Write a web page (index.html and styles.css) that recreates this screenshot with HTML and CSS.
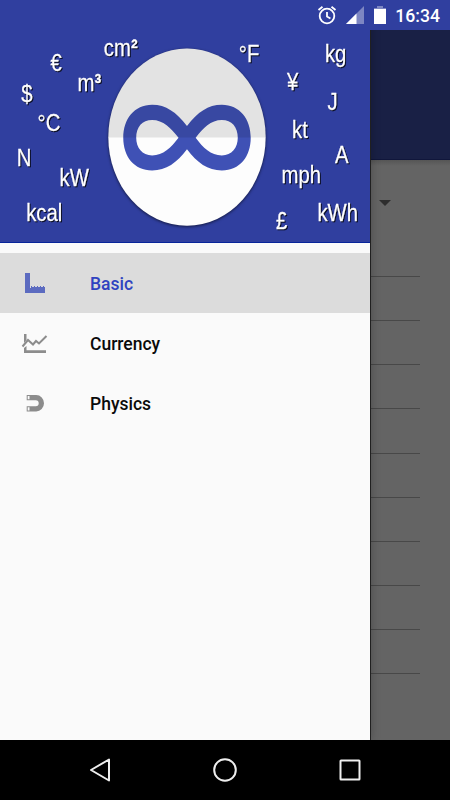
FILE: index.html
```html
<!DOCTYPE html>
<html lang="en">
<head>
<meta charset="utf-8">
<title>Unit converter</title>
<link rel="stylesheet" href="styles.css">
</head>
<body>
<div class="phone">
  <main class="page">
    <div class="status-strip"></div>
    <div class="toolbar"></div>
    <div class="content">
      <div class="picker"><span class="caret"></span></div>
      <div class="rows"><i></i><i></i><i></i><i></i><i></i><i></i><i></i><i></i><i></i><i></i></div>
    </div>
  </main>

  <aside class="drawer">
    <svg class="cover" viewBox="0 0 370 243" width="370" height="243">
      <defs>
        <clipPath id="top"><rect x="100" y="40" width="180" height="98"/></clipPath>
      </defs>
      <ellipse class="disc" cx="187" cy="137.700" rx="79" ry="89"/>
      <path class="loop" fill-rule="evenodd" transform="translate(0 .4)" d="M187 126C176 112 166 104.700 152 104.700C134 104.700 123 119 123 138C123 157 134 170.800 152 170.800C166 170.800 177 163 187 149.500C197 163 208 170.800 222 170.800C240 170.800 251 157 251 138C251 119 240 104.700 222 104.700C208 104.700 198 112 187 126ZM178.500 138C171 148 163 155.700 152 155.700C142 155.700 136 148 136 138C136 127 142 120 152 120C163 120 171 128 178.500 138ZM195.700 138C203 128 211 120 222 120C232 120 238 127 238 138C238 148 232 155.700 222 155.700C211 155.700 203 148 195.700 138Z"/>
      <ellipse class="shade" cx="187" cy="137.700" rx="79" ry="89" clip-path="url(#top)"/>
      <g class="units">
        <text transform="translate(50 71) scale(.888 1.030)">€</text>
        <text transform="translate(103.500 56.500) scale(.888 1.030)">cm<tspan class="sup">²</tspan></text>
        <text transform="translate(77 91.500) scale(.888 1.030)">m<tspan class="sup">³</tspan></text>
        <text transform="translate(20.500 102.500) scale(.888 1.030)">$</text>
        <text transform="translate(37 131.500) scale(.888 1.030)">°C</text>
        <text transform="translate(16 166.800) scale(.888 1.030)">N</text>
        <text transform="translate(59 186.500) scale(.888 1.030)">kW</text>
        <text transform="translate(25.500 222) scale(.888 1.030)">kcal</text>
        <text transform="translate(239 62.500) scale(.888 1.030)">°F</text>
        <text transform="translate(325.500 62.500) scale(.888 1.030)">kg</text>
        <text transform="translate(287.500 90.500) scale(.888 1.030)">¥</text>
        <text transform="translate(328 110.500) scale(.888 1.030)">J</text>
        <text transform="translate(292.500 139) scale(.888 1.030)">kt</text>
        <text transform="translate(335.500 163.500) scale(.888 1.030)">A</text>
        <text transform="translate(282 183.500) scale(.888 1.030)">mph</text>
        <text transform="translate(276.500 230) scale(.888 1.030)">£</text>
        <text transform="translate(318 222) scale(.888 1.030)">kWh</text>
      </g>
    </svg>
    <nav class="menu">
      <a class="item active">
        <svg class="icon" viewBox="0 0 30 30"><path d="M5 5h5v15h1v-2h1v1h2v-1h1v1h2v-1h1v1h2v-1h1v1h2v-1h1v1h1v6H5z"/></svg>
        <span>Basic</span>
      </a>
      <a class="item">
        <svg class="icon" viewBox="0 0 30 30"><path d="M4 6h2.500v6L4 15zM4 20l2.500-2v4.200H26V25H4z"/><path class="stroke" d="M2.500 18.500L8 12l5 4.500 3-3.500 3 2.500 7.500-7.500"/></svg>
        <span>Currency</span>
      </a>
      <a class="item">
        <svg class="icon" viewBox="0 0 30 30"><path fill-rule="evenodd" d="M6.700 7h9.500a7.800 8.200 0 0 1 0 16.400H6.700v-5.200h9a3 3 0 0 0 0-6h-9zM7.700 8v3.200h1.800V8zM7.700 19.200v3.200h1.800v-3.200z"/></svg>
        <span>Physics</span>
      </a>
    </nav>
  </aside>

  <header class="status">
    <svg class="alarm" viewBox="0 0 20 20" width="20" height="20"><circle cx="10" cy="11" r="7.300"/><path d="M10 7v4.500l3.400 2M1.500 5l4-3.300M18.500 5l-4-3.300"/></svg>
    <svg class="signal" viewBox="0 0 18 18" width="18" height="18"><path class="dim" d="M18 0v18H0z"/><path d="M10.500 7.500V18H0z"/></svg>
    <svg class="battery" viewBox="0 0 12 18" width="12" height="18"><path class="dim" d="M3 0h6v2h3v2H0V2h3z"/><path d="M0 3h12v15H0z"/></svg>
    <span class="clock">16:34</span>
  </header>

  <footer class="navbar">
    <svg viewBox="0 0 26 26" width="26" height="26"><path d="M22 2.500v21L4 13z"/></svg>
    <svg viewBox="0 0 26 26" width="26" height="26"><circle cx="13" cy="13" r="10.800"/></svg>
    <svg viewBox="0 0 26 26" width="26" height="26"><rect x="3.500" y="3.500" width="19" height="19" rx=".5"/></svg>
  </footer>
</div>
</body>
</html>
```
FILE: styles.css
```css
* { box-sizing: border-box; }
body { margin: 0; font-family: Roboto, sans-serif; }
.phone {
  position: relative;
  width: 450px;
  height: 800px;
  overflow: hidden;
  display: flex;
  flex-direction: column;
  background: #000;
}
.page { height: 740px; display: flex; flex-direction: column; background: #646464; }
.status-strip { height: 30px; background: #303f9f; }
.toolbar { height: 130px; background: #192045; border-bottom: 1px solid #10163b; }
.content {
  flex: 1;
  padding-right: 30px;
  background: linear-gradient(#555, #646464 6px);
}
.picker { height: 72px; display: flex; justify-content: flex-end; padding: 40px 29px 0 0; }
.caret { width: 12px; height: 6px; background: #2d2d2d; clip-path: polygon(0 0, 100% 0, 50% 100%); }
.rows { display: flex; flex-direction: column; }
.rows i { height: 44.150px; border-bottom: 1px solid #484848; }
.rows i:first-child { height: 45px; }
.drawer {
  position: absolute;
  left: 0;
  top: 0;
  width: 370px;
  height: 740px;
  background: #fafafa;
  box-shadow: 1px 0 0 #202020, 0 0 10px rgba(0, 0, 0, .3);
}
.cover { display: block; background: #303f9f; border-bottom: 1px solid #07249a; }
.disc { fill: #fdfdfd; filter: drop-shadow(0 1px 1.500px rgba(0, 0, 0, .6)); }
.loop { fill: #3f51b5; }
.shade { fill: #000; opacity: .1; }
.units {
  font: 23px "Liberation Sans", sans-serif;
  fill: #fff;
  stroke: #fff;
  stroke-width: .25;
  filter: drop-shadow(1px 1px .8px rgba(0, 0, 0, .8));
}
.sup { font-weight: 700; }
.menu { padding-top: 10px; }
.item {
  height: 60px;
  display: flex;
  align-items: center;
  padding-left: 20px;
  color: #0a0a0a;
  font-size: 17.500px;
  font-weight: 500;
}
.item span { padding-top: 2px; }
.item.active { background: #dcdcdc; color: #3043c0; }
.icon { width: 30px; height: 30px; margin-right: 40px; fill: #8c8c8c; }
.active .icon { fill: #5c6bc0; }
.stroke { fill: none; stroke: #8c8c8c; stroke-width: 2; }
.status {
  position: absolute;
  right: 0;
  top: 0;
  width: 150px;
  height: 30px;
  padding-right: 10px;
  display: flex;
  justify-content: flex-end;
  align-items: center;
  color: #fff;
  background: #303f9f;
}
.status svg { fill: #fff; }
.status .alarm { fill: none; stroke: #fff; stroke-width: 1.800; margin-right: 9px; }
.signal { margin-right: 10px; }
.battery { margin-right: 9px; }
.status .dim { fill: #7d86c2; }
.clock { font-size: 17.600px; font-weight: 500; line-height: 30px; padding-top: 2px; }
.navbar {
  height: 60px;
  padding: 0 37.500px;
  display: grid;
  grid-template-columns: repeat(3, 1fr);
  align-items: center;
  justify-items: center;
}
.navbar svg { fill: none; stroke: #eee; stroke-width: 2; stroke-linejoin: round; }
```
